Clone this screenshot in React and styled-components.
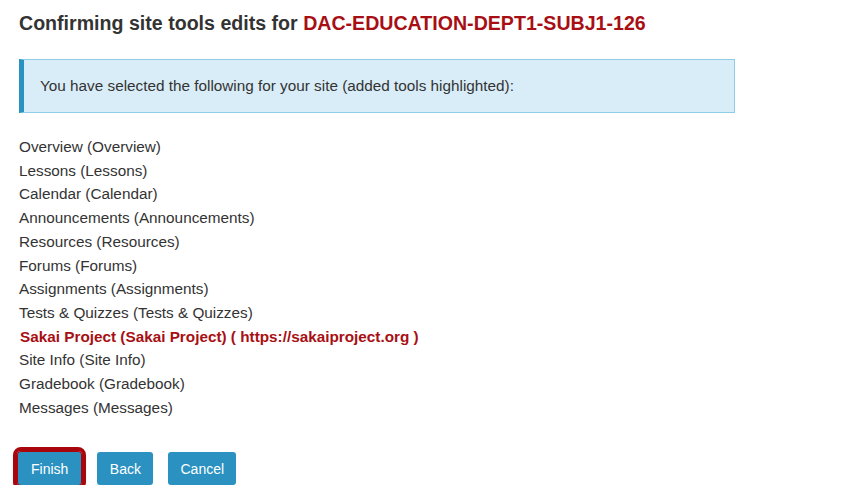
import React from "react";
import styled, { createGlobalStyle } from "styled-components";

const Global = createGlobalStyle`
  html, body { margin: 0; padding: 0; background: #fff; }
  body { font-family: "Liberation Sans", Arial, sans-serif; color: #333; }
`;

const Page = styled.div`
  padding: 12px 19px 0 19px;
  width: 716px;
`;

const Title = styled.h2`
  margin: 0;
  font-size: 19.6px;
  line-height: 22px;
  font-weight: bold;
  color: #333;
`;

const Site = styled.span`
  color: #a80f14;
`;

const Info = styled.div`
  margin-top: 25px;
  height: 52px;
  box-sizing: content-box;
  border: 1px solid #8fcde6;
  border-left: 5px solid #2a92c3;
  background: #d9edf8;
  display: flex;
  align-items: center;
  padding-left: 16px;
  font-size: 15.3px;
  color: #333;
`;

const List = styled.ul`
  list-style: none;
  margin: 22px 0 0 0;
  padding: 0;
`;

const Item = styled.li`
  font-size: 15.3px;
  line-height: 23.7px;
  color: ${(p) => (p.$added ? "#a80f14" : "#333")};
  font-weight: ${(p) => (p.$added ? "bold" : "normal")};
  padding-left: ${(p) => (p.$added ? "1px" : "0")};
`;

const Actions = styled.div`
  display: flex;
  gap: 15px;
  margin-top: 33px;
  margin-left: -1px;
`;

const Button = styled.button`
  height: 33px;
  padding: 0 ${(p) => p.$pad}px;
  margin-right: ${(p) => (p.$focused ? "1px" : "0")};
  border: none;
  border-radius: 3px;
  background: #2a91c1;
  color: #fff;
  font-family: "Liberation Sans", Arial, sans-serif;
  font-size: 14px;
  cursor: pointer;
  outline: ${(p) => (p.$focused ? "4px solid #a8060c" : "none")};
  outline-offset: 1px;
  box-shadow: ${(p) => (p.$focused ? "0 0 0 1px #a8060c, 0 4px 5px 2px rgba(0,0,0,0.3)" : "none")};
`;

const tools = [
  ["Overview (Overview)"],
  ["Lessons (Lessons)"],
  ["Calendar (Calendar)"],
  ["Announcements (Announcements)"],
  ["Resources (Resources)"],
  ["Forums (Forums)"],
  ["Assignments (Assignments)"],
  ["Tests & Quizzes (Tests & Quizzes)"],
  ["Sakai Project (Sakai Project) ( https://sakaiproject.org )", true],
  ["Site Info (Site Info)"],
  ["Gradebook (Gradebook)"],
  ["Messages (Messages)"],
];

export default function App() {
  return (
    <>
      <Global />
      <Page>
        <Title>
          Confirming site tools edits for <Site>DAC-EDUCATION-DEPT1-SUBJ1-126</Site>
        </Title>
        <Info>You have selected the following for your site (added tools highlighted):</Info>
        <List>
          {tools.map(([t, added]) => (
            <Item key={t} $added={added}>{t}</Item>
          ))}
        </List>
        <Actions>
          <Button $focused $pad={13}>Finish</Button>
          <Button $pad={12.5}>Back</Button>
          <Button $pad={12}>Cancel</Button>
        </Actions>
      </Page>
    </>
  );
}
